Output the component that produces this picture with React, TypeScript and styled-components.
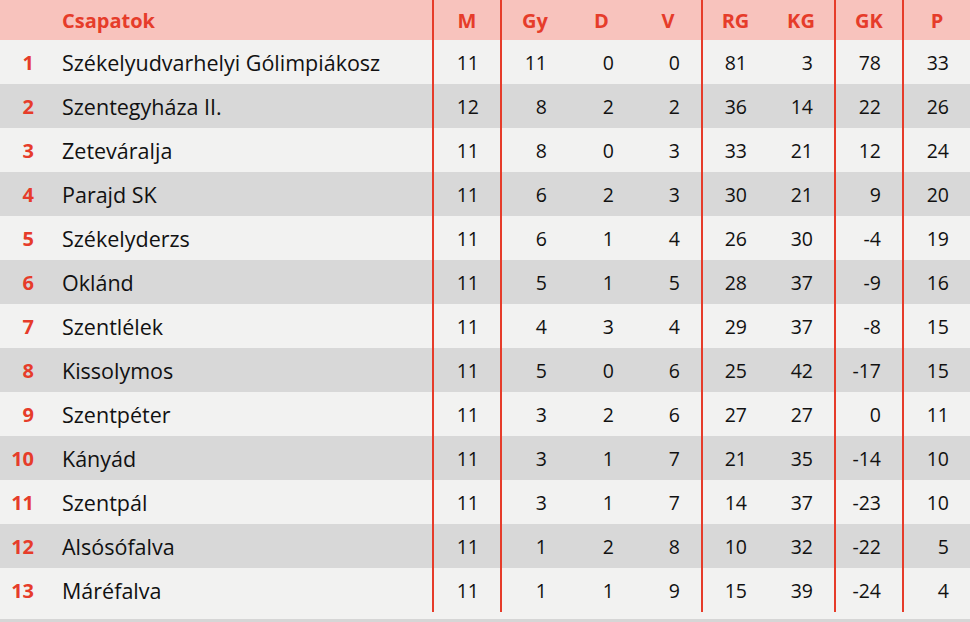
import React from 'react';
import styled, { createGlobalStyle } from 'styled-components';

const Global = createGlobalStyle`
  * {
    box-sizing: border-box;
  }
  body {
    margin: 0;
    background: #f2f2f1;
    font-family: 'Open Sans', 'Noto Sans', sans-serif;
  }
`;

const RED = '#e63c2a';

const Wrapper = styled.div`
  width: 970px;
  background: #f2f2f1;
  padding-bottom: 7px;
  border-bottom: 3px solid #d6d6d6;
`;

const Table = styled.table`
  width: 970px;
  border-collapse: collapse;
  table-layout: fixed;
`;

const HeadRow = styled.tr`
  height: 40px;
  background: #f8c3bd;
`;

const Row = styled.tr<{ $dark: boolean }>`
  height: 44px;
  background: ${p => (p.$dark ? '#d8d8d8' : '#f2f2f1')};
`;

const Th = styled.th<{ $line?: boolean; $left?: boolean }>`
  padding: 0;
  color: ${RED};
  font-size: 20px;
  font-weight: 700;
  text-align: ${p => (p.$left ? 'left' : 'center')};
  padding-left: ${p => (p.$left ? '6px' : '0')};
  border-left: ${p => (p.$line ? `2px solid ${RED}` : 'none')};
`;

const Rank = styled.td`
  padding: 0 22px 0 0;
  text-align: right;
  color: ${RED};
  font-size: 20px;
  font-weight: 700;
`;

const Name = styled.td`
  padding: 0 0 0 6px;
  color: #111;
  font-size: 21.5px;
  white-space: nowrap;
`;

const Num = styled.td<{ $line?: boolean }>`
  padding: 0 21px 0 0;
  text-align: right;
  color: #111;
  font-size: 19.5px;
  border-left: ${p => (p.$line ? `2px solid ${RED}` : 'none')};
`;

// name, M, Gy, D, V, RG, KG, GK, P
type Team = [string, number, number, number, number, number, number, number, number];

const teams: Team[] = [
  ['Székelyudvarhelyi Gólimpiákosz', 11, 11, 0, 0, 81, 3, 78, 33],
  ['Szentegyháza II.', 12, 8, 2, 2, 36, 14, 22, 26],
  ['Zeteváralja', 11, 8, 0, 3, 33, 21, 12, 24],
  ['Parajd SK', 11, 6, 2, 3, 30, 21, 9, 20],
  ['Székelyderzs', 11, 6, 1, 4, 26, 30, -4, 19],
  ['Oklánd', 11, 5, 1, 5, 28, 37, -9, 16],
  ['Szentlélek', 11, 4, 3, 4, 29, 37, -8, 15],
  ['Kissolymos', 11, 5, 0, 6, 25, 42, -17, 15],
  ['Szentpéter', 11, 3, 2, 6, 27, 27, 0, 11],
  ['Kányád', 11, 3, 1, 7, 21, 35, -14, 10],
  ['Szentpál', 11, 3, 1, 7, 14, 37, -23, 10],
  ['Alsósófalva', 11, 1, 2, 8, 10, 32, -22, 5],
  ['Máréfalva', 11, 1, 1, 9, 15, 39, -24, 4],
];

const widths = [56, 377, 68, 67, 67, 67, 66, 67, 68, 67];
// column indexes that get a red divider on their left side
const lineAt = [2, 3, 6, 8, 9];

export default function App() {
  return (
    <Wrapper>
      <Global />
      <Table>
        <colgroup>
          {widths.map((w, i) => (
            <col key={i} style={{ width: w }} />
          ))}
        </colgroup>
        <thead>
          <HeadRow>
            <Th />
            <Th $left>Csapatok</Th>
            {['M', 'Gy', 'D', 'V', 'RG', 'KG', 'GK', 'P'].map((h, i) => (
              <Th key={h} $line={lineAt.includes(i + 2)}>
                {h}
              </Th>
            ))}
          </HeadRow>
        </thead>
        <tbody>
          {teams.map(([name, ...nums], idx) => (
            <Row key={name} $dark={idx % 2 === 1}>
              <Rank>{idx + 1}</Rank>
              <Name>{name}</Name>
              {nums.map((n, i) => (
                <Num key={i} $line={lineAt.includes(i + 2)}>
                  {n}
                </Num>
              ))}
            </Row>
          ))}
        </tbody>
      </Table>
    </Wrapper>
  );
}
